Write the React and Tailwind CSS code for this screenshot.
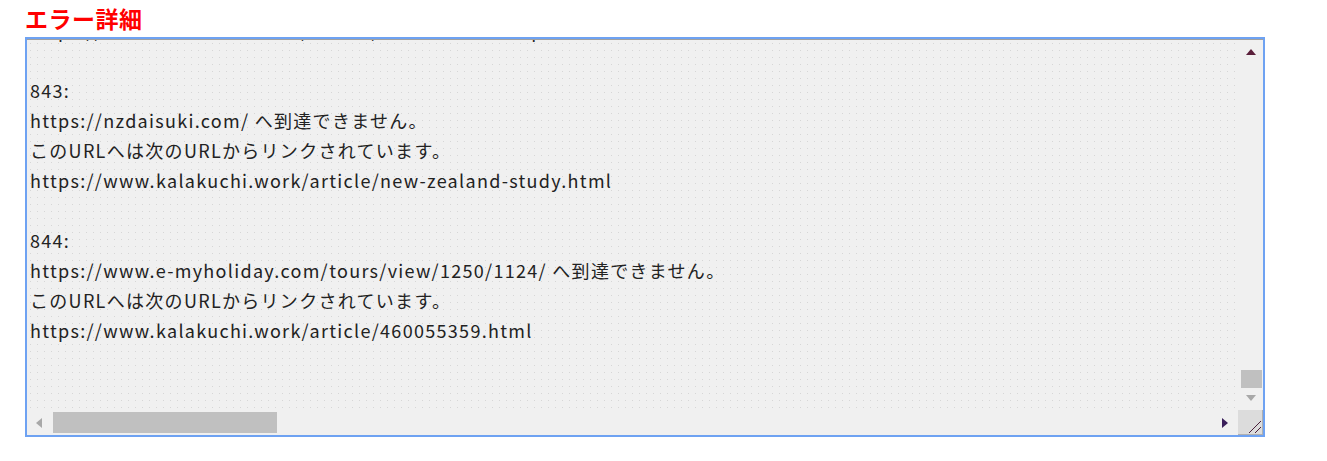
export default function App() {
  const font = { fontFamily: '"Noto Sans CJK JP", "Noto Sans", sans-serif' };
  const lines = [
    "https://www.kalakuchi.work/article/new-zealand-trip.html",
    "",
    "843:",
    "https://nzdaisuki.com/ へ到達できません。",
    "このURLへは次のURLからリンクされています。",
    "https://www.kalakuchi.work/article/new-zealand-study.html",
    "",
    "844:",
    "https://www.e-myholiday.com/tours/view/1250/1124/ へ到達できません。",
    "このURLへは次のURLからリンクされています。",
    "https://www.kalakuchi.work/article/460055359.html",
    "",
    "",
  ];
  return (
    <div className="bg-white w-[1327px] h-[461px] pl-[25px] pt-[3px]" style={font}>
      <div className="text-[#ff0000] font-bold text-[23px] leading-[30px] h-[34px] tracking-[0.5px]">エラー詳細</div>
      <div className="w-[1240px] h-[400px] border-2 border-[#6ea2f2] bg-[#f0f0f0] flex flex-col">
        <div className="flex flex-1 min-h-0 border-t border-[#a0a0a0]">
          <div className="flex-1 min-w-0 overflow-hidden bg-[radial-gradient(#d6d6d6_0.7px,transparent_0.8px)] bg-[length:7px_7px]">
            <div className="-mt-[25px] pl-[3px] text-[18px] leading-[30px] tracking-[1.3px] text-[#222] whitespace-pre">
              {lines.map((l, i) => (
                <div key={i} className="h-[30px]">{l}</div>
              ))}
            </div>
          </div>
          <div className="w-[25px] flex flex-col items-center">
            <svg width="12" height="8" viewBox="0 0 12 8" className="mt-[8px]">
              <path d="M6 1 L11 7 L1 7 Z" fill="#5a1f3a" />
            </svg>
            <div className="flex-1" />
            <div className="w-[21px] h-[18px] bg-[#c0c0c0] ml-[2px]" />
            <svg width="12" height="8" viewBox="0 0 12 8" className="mt-[6px] mb-[8px]">
              <path d="M1 1 L11 1 L6 7 Z" fill="#a8a8a8" />
            </svg>
          </div>
        </div>
        <div className="h-[25px] flex items-center">
          <svg width="8" height="12" viewBox="0 0 8 12" className="ml-[8px]">
            <path d="M7 1 L7 11 L1 6 Z" fill="#a8a8a8" />
          </svg>
          <div className="w-[224px] h-[21px] bg-[#c0c0c0] ml-[10px]" />
          <div className="flex-1" />
          <svg width="8" height="12" viewBox="0 0 8 12" className="mr-[9px]">
            <path d="M1 1 L7 6 L1 11 Z" fill="#3a1f5a" />
          </svg>
          <div className="w-[25px] h-[25px] bg-[#dcdcdc] border-r border-b border-[#b0b0b0] relative">
            <svg width="25" height="25" viewBox="0 0 25 25" className="absolute inset-0">
              <path d="M11 23 L23 11 M17 23 L23 17" stroke="#4a1f3a" strokeWidth="1" />
            </svg>
          </div>
        </div>
      </div>
    </div>
  );
}
